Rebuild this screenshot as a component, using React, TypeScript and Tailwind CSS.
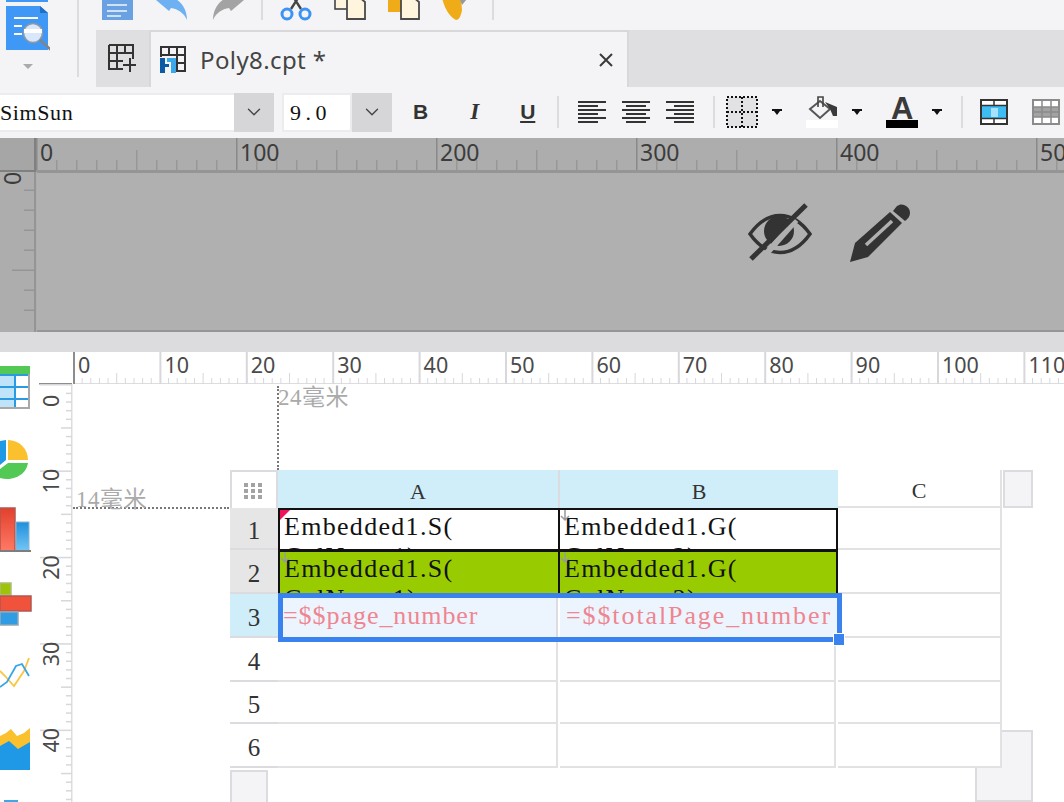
import React from 'react';
import { ChevronDown } from 'lucide-react';

const SERIF = 'font-["Liberation_Serif","Noto_Sans_CJK_SC",serif]';
const range = (n: number) => Array.from({ length: n }, (_, i) => i);

const DocIcon = () => (
  <svg width="32" height="30" viewBox="0 0 32 30">
    <rect x="1" y="-4" width="32" height="24" fill="#6aa1e2" />
    <path d="M6 5H26M6 11H26M6 16H20" stroke="#fff" strokeWidth="1.6" opacity="0.9" />
  </svg>
);

const UndoIcon = ({ flip }: { flip?: boolean }) => (
  <svg width="34" height="30" viewBox="0 0 34 30" className={flip ? '-scale-x-100' : ''}>
    <path
      d="M1 0L14 11L16 8C23 9 29 13 32 20C32 10 27 2 19 -2L1 -2Z"
      fill={flip ? '#a3a3a3' : '#6db1f2'}
    />
  </svg>
);

const ScissorsIcon = () => (
  <svg width="32" height="30" viewBox="0 0 32 30">
    <path d="M11 9L18 -2M21 9L14 -2" stroke="#444" strokeWidth="2.4" />
    <circle cx="7" cy="14" r="5" fill="none" stroke="#3b93f2" strokeWidth="3" />
    <circle cx="25" cy="14" r="5" fill="none" stroke="#3b93f2" strokeWidth="3" />
  </svg>
);

const CopyIcon = ({ back }: { back: string }) => (
  <svg width="32" height="30" viewBox="0 0 32 30">
    {back === 'sheet' ? (
      <rect x="1" y="-4" width="14" height="13" fill="#fff5de" stroke="#444" strokeWidth="1.6" />
    ) : (
      <rect x="0" y="-4" width="14" height="16" fill="#f0ac18" />
    )}
    <path d="M13 -3H25L31 2V19H13Z" fill="#fff5de" stroke="#4a4a4a" strokeWidth="1.8" />
  </svg>
);

const BrushIcon = () => (
  <svg width="26" height="30" viewBox="0 0 26 30">
    <path d="M0 -2H19L20 10C19 16 17 20 14 20C8 17 3 10 0 -2Z" fill="#f0ac18" />
    <path d="M17 -3L25 -1L20 5Z" fill="#999" />
  </svg>
);

const AppLogo = () => (
  <svg width="44" height="53" viewBox="0 0 44 53" className="ml-[6px]">
    <rect x="0" y="-2" width="42" height="4" fill="#3f98f5" />
    <path d="M0 6H34L42 13V50H0Z" fill="#3f98f5" />
    <path d="M34 6L42 13H34Z" fill="#1f6fc4" />
    <path d="M8 18H32M8 26H16M8 34H16" stroke="#fff" strokeWidth="2" />
    <circle cx="27" cy="33" r="9.5" fill="#d8e8fa" stroke="#8d98a4" strokeWidth="1.6" />
    <path d="M18 31H36" stroke="#fff" strokeWidth="4" />
    <path d="M34 40L45 50" stroke="#7b8590" strokeWidth="2.6" />
  </svg>
);

const GridPlusIcon = () => (
  <svg width="30" height="30" viewBox="0 0 30 30">
    <path d="M1 1H25V15M1 1V25H15M1 9H25M1 17H15M9 1V25M17 1V9" fill="none" stroke="#333" strokeWidth="2" />
    <path d="M22 13V27M15 20H28" stroke="#333" strokeWidth="2" transform="translate(0 1)" />
  </svg>
);

const TabFileIcon = () => (
  <svg width="28" height="28" viewBox="0 0 28 28">
    <path d="M1 1H25V25H1ZM1 9H25M9 1V9M17 1V25M17 17H25" fill="none" stroke="#333" strokeWidth="2" />
    <rect x="0" y="11" width="16" height="17" fill="#f4f4f6" />
    <path d="M0 12H5V18H9V21H5V27H0Z" fill="#0b5aa5" />
    <path d="M7 12H16V27H11V16H7Z" fill="#3aa8ea" />
  </svg>
);

const AlignIcon = ({ side }: { side: 'left' | 'center' | 'right' }) => {
  const lines = [28, 20, 28, 20, 28, 20];
  return (
    <svg width="28" height="24" viewBox="0 0 28 24">
      {lines.map((w, i) => (
        <rect
          key={i}
          x={side === 'left' ? 0 : side === 'right' ? 28 - w : (28 - w) / 2}
          y={1 + i * 4}
          width={w}
          height="2"
          fill="#333"
        />
      ))}
    </svg>
  );
};

const CaretDown = () => (
  <svg width="10" height="6" viewBox="0 0 10 6">
    <path d="M0 0H10V2H8L5 6L2 2H0Z" fill="#111" />
  </svg>
);

const Sep = () => <div className="h-[32px] w-[2px] bg-[#dcdcde]" />;

const BorderIcon = () => (
  <svg width="32" height="32" viewBox="0 0 32 32" shapeRendering="crispEdges">
    <rect x="1" y="1" width="30" height="30" fill="#e2e2e4" />
    <path d="M1 1H31V31H1ZM1 16H31M16 1V31" fill="none" stroke="#111" strokeWidth="2" strokeDasharray="2 2" />
  </svg>
);

const FillIcon = () => (
  <div className="flex h-[32px] w-[32px] flex-col items-center">
    <svg width="32" height="24" viewBox="0 0 32 24">
      <path d="M14 5L24 13L14 22L4 13Z" fill="none" stroke="#555" strokeWidth="2" />
      <path d="M12 11V1H17V11" fill="none" stroke="#444" strokeWidth="1.6" />
      <path d="M19 6L31 11L31 20L27 20L24 13Z" fill="#3a3a3a" />
    </svg>
    <div className="h-[8px] w-full bg-white" />
  </div>
);

const FontColorIcon = () => (
  <div className="flex h-[32px] w-[32px] flex-col items-center">
    <div className='h-[24px] font-["Liberation_Sans",sans-serif] text-[31px] leading-[25px] font-bold text-[#3a3a3a]'>A</div>
    <div className="h-[8px] w-full bg-black" />
  </div>
);

const CellAIcon = () => (
  <svg width="28" height="26" viewBox="0 0 28 26">
    <rect x="1" y="1" width="26" height="24" fill="#3ebdf5" stroke="#333" strokeWidth="2" />
    <rect x="2" y="2" width="24" height="4" fill="#fff" />
    <rect x="2" y="20" width="24" height="4" fill="#fff" />
    <path d="M14 2V6M14 20V24M1 6.500H27M1 19.500H27" stroke="#333" strokeWidth="1.5" />
    <rect x="11" y="9" width="7" height="9" fill="#a7e2fb" />
  </svg>
);

const TableGrayIcon = () => (
  <svg width="28" height="26" viewBox="0 0 28 26">
    <rect x="1" y="1" width="26" height="24" fill="#fff" stroke="#8b8b8b" strokeWidth="2" />
    <rect x="2" y="8" width="24" height="10" fill="#a3a3a3" />
    <path d="M10 1V25M19 1V25M1 8H27M1 13H27M1 18H27" stroke="#8b8b8b" strokeWidth="1.5" />
  </svg>
);

const EyeSlash = () => (
  <svg width="64" height="60" viewBox="0 0 64 60">
    <path d="M2 32C12 18 22 13.500 32 13.500C42 13.500 52 18 62 32C52 46 42 50.500 32 50.500C22 50.500 12 46 2 32Z" fill="none" stroke="#333" strokeWidth="3.5" />
    <circle cx="31" cy="29" r="15" fill="#333" />
    <path d="M44 15L14 49" stroke="#b0b0b0" strokeWidth="6" transform="translate(4 3)" />
    <path d="M3 57L58 3" stroke="#333" strokeWidth="5" />
  </svg>
);

const PencilIcon = () => (
  <svg width="60" height="60" viewBox="0 0 60 60">
    <path d="M0 60L5 41L40 10L52 21L18 55Z" fill="#333" />
    <path d="M16 43L42 19" stroke="#b0b0b0" strokeWidth="3.500" />
    <path d="M43 9L47 4C52 0 60 4 60 11C60 14 58 17 55 19Z" fill="#333" />
  </svg>
);

// horizontal ruler of the form pane, 100 units = 200px
const FormRulerTop = () => (
  <svg width="1028" height="34" viewBox="0 0 1028 34" className="block shrink-0">
    <rect y="32" width="1028" height="2" fill="#959595" />
    {range(53).map(i => {
      const x = i * 20;
      const h = i % 10 === 0 ? 32 : i % 5 === 0 ? 20 : 10;
      return <rect key={i} x={x} y={32 - h} width="1.5" height={h} fill={i % 10 === 0 ? '#8a8a8a' : '#989898'} />;
    })}
    {range(6).map(i => (
      <text key={i} x={i * 200 + 4} y={23} fontFamily="Noto Sans, sans-serif" fontSize="23" fill="#3c3c3c">{i * 100}</text>
    ))}
  </svg>
);

const FormRulerLeft = () => (
  <svg width="37" height="160" viewBox="0 0 37 160" className="block shrink-0">
    <rect x="34" width="2" height="160" fill="#959595" />
    {range(8).map(i => (
      <rect key={i} x={i === 5 ? 12 : 24} y={i * 20 - 2.5} width={i === 5 ? 23 : 11} height="1.500" fill="#959595" />
    ))}
    <text transform="translate(21 13) rotate(-90)" fontFamily="Noto Sans, sans-serif" fontSize="23" fill="#3c3c3c">0</text>
  </svg>
);

// report rulers, 10 units = 86.4px
const SheetRulerTop = () => (
  <svg width="991" height="32" viewBox="0 0 991 32" className="block">
    <rect y="31" width="991" height="1.500" fill="#dddde0" />
    <rect x="0" y="0" width="1.500" height="32" fill="#8d8d8d" />
    {range(115).map(i => {
      const x = i * 8.64;
      const major = i % 10 === 0;
      const h = major ? 32 : i % 5 === 0 ? 11 : 6;
      return <rect key={i} x={x} y={32 - h} width={major ? 2 : 1} height={h} fill={i === 0 ? '#8d8d8d' : '#d8d8dc'} />;
    })}
    {range(12).map(i => (
      <text key={i} x={i * 86.4 + 5} y={21} fontFamily="Noto Sans, sans-serif" fontSize="21.5" fill="#4a4a4a">{i * 10}</text>
    ))}
  </svg>
);

const SheetRulerLeft = () => (
  <svg width="34" height="450" viewBox="0 0 34 450" className="block shrink-0">
    <rect x="0" y="31" width="33" height="1.500" fill="#8d8d8d" />
    <rect x="32" y="32" width="1.500" height="418" fill="#dddde0" />
    {range(49).map(i => {
      const y = 32 + i * 8.64;
      const major = i % 10 === 0;
      const w = major ? 32 : i % 5 === 0 ? 11 : 6;
      return <rect key={i} x={33 - w} y={y} width={w} height="1.500" fill="#d8d8dc" />;
    })}
    {range(5).map(i => (
      <text key={i} transform={`translate(20 ${i * 86.4 + 55}) rotate(-90)`} fontFamily="Noto Sans, sans-serif" fontSize="21.5" fill="#4a4a4a">{i * 10}</text>
    ))}
  </svg>
);

const TableTile = () => (
  <svg width="32" height="72" viewBox="0 0 32 72" className="block overflow-visible">
    <rect x="-2" y="22" width="31" height="33" fill="#fff" />
    <rect x="-2" y="14" width="32" height="8" fill="#53c955" />
    <rect x="0" y="22" width="16" height="33" fill="#bfe4fa" />
    <path d="M-2 23H29M-2 35H29M-2 47H29M15 22V55" stroke="#2a9be3" strokeWidth="2" />
    <path d="M29 22V56H-2" fill="none" stroke="#a8a8a8" strokeWidth="2" />
  </svg>
);

const PieTile = () => (
  <svg width="32" height="72" viewBox="0 0 32 72" className="block">
    <path d="M8 36V16A20 20 0 0 1 28 36Z" fill="#fbc02d" />
    <path d="M6 16V36L0 41V17Z" fill="#1f98e6" />
    <path d="M8 39H28A21 18 0 0 1 0 54V45Z" fill="#53c955" />
  </svg>
);

const BarsTile = () => (
  <svg width="32" height="72" viewBox="0 0 32 72" className="block">
    <defs>
      <linearGradient id="redBar" x1="0" y1="0" x2="0" y2="1">
        <stop offset="0" stopColor="#e2402c" />
        <stop offset="1" stopColor="#ff7a66" />
      </linearGradient>
      <linearGradient id="blueBar" x1="0" y1="0" x2="0" y2="1">
        <stop offset="0" stopColor="#1f8fdc" />
        <stop offset="1" stopColor="#74c6f5" />
      </linearGradient>
    </defs>
    <rect x="0" y="12" width="15" height="43" fill="url(#redBar)" stroke="#b4564e" strokeWidth="1.500" />
    <rect x="16" y="26" width="13" height="29" fill="url(#blueBar)" stroke="#8fb4cc" strokeWidth="1" />
    <rect x="0" y="54" width="31" height="2" fill="#7d7d7d" />
  </svg>
);

const HBarsTile = () => (
  <svg width="33" height="72" viewBox="0 0 33 72" className="block">
    <rect x="0" y="15" width="11" height="12" fill="#9fc30a" stroke="#a8bf7a" strokeWidth="1.500" />
    <rect x="0" y="28" width="31" height="15" fill="#f0523c" stroke="#b4564e" strokeWidth="1.500" />
    <rect x="0" y="44" width="18" height="13" fill="#2f9ce4" stroke="#8fa9b8" strokeWidth="1.500" />
  </svg>
);

const LineTile = () => (
  <svg width="32" height="72" viewBox="0 0 32 72" className="block">
    <path d="M0 31L5 36L14 46L24 31L29 18" fill="none" stroke="#fbc53f" strokeWidth="1.800" />
    <path d="M0 47L7 42L16 26L22 24L29 36" fill="none" stroke="#35a6e6" strokeWidth="1.800" />
  </svg>
);

const AreaTile = () => (
  <svg width="32" height="72" viewBox="0 0 32 72" className="block">
    <path d="M0 24L6 21L11 17L17 24L24 21L30 16V38H0Z" fill="#fbc02d" />
    <path d="M0 34L9 29L18 37L30 30V58H0Z" fill="#1f98e6" />
  </svg>
);

const LastTile = () => (
  <svg width="32" height="72" viewBox="0 0 32 72" className="block">
    <rect x="4" y="16" width="14" height="4" fill="#3fa6e8" />
  </svg>
);

const HeaderDots = () => (
  <svg width="20" height="16" viewBox="0 0 20 16">
    {range(3).map(r => range(3).map(c => <rect key={`${r}${c}`} x={c * 7} y={r * 6} width="4" height="4" fill="#a3a3a3" />))}
  </svg>
);

const BLACK_CELL = 'border-2 border-[#111] -mb-[1px] relative z-[1] overflow-hidden pl-[4px] pt-[2px] whitespace-nowrap text-[26px] leading-[30px] tracking-[1.3px] text-[#111]';

const CellMark = () => (
  <svg width="10" height="12" viewBox="0 0 10 12" className="absolute top-0 left-0">
    <path d="M5 0V9M1 6L5 10L9 6" fill="none" stroke="#999" strokeWidth="1.500" />
  </svg>
);

const RowHead = ({ n, bg }: { n: number; bg: string }) => (
  <div className={`flex items-center justify-center border-b-2 border-[#dcdce0] pt-[5px] text-[25px] text-[#333] ${bg}`}>{n}</div>
);

const EmptyRow = ({ n }: { n: number }) => (
  <>
    <RowHead n={n} bg="bg-white" />
    <div className="mr-[2px] border-r-2 border-b-2 border-[#e2e2e4]" />
    <div className="mr-[2px] border-r-2 border-b-2 border-[#e2e2e4]" />
    <div className="border-r-2 border-b-2 border-[#e2e2e4]" />
  </>
);

const ReportGrid = () => (
  <div
    className={`relative z-[1] grid w-[772px] grid-cols-[48px_282px_278px_164px] grid-rows-[38px_42px_44px_44px_44px_42px_44px] bg-white leading-[26px] ${SERIF}`}
  >
    <div className="flex items-center justify-center border-t-2 border-r-2 border-l-2 border-[#dcdce0] pt-[2px]">
      <HeaderDots />
    </div>
    <div className="flex items-center justify-center border-r-2 border-[#dcdce0] bg-[#cfeefa] pt-[6px] text-[22px] text-[#333]">A</div>
    <div className="flex items-center justify-center bg-[#cfeefa] pt-[6px] text-[22px] text-[#333]">B</div>
    <div className="flex items-center justify-center border-r-2 border-b-2 border-[#e2e2e4] pt-[6px] text-[22px] text-[#333]">C</div>

    <RowHead n={1} bg="bg-[#e6e6e6]" />
    <div className={`${BLACK_CELL} bg-white`}>
      <span className="absolute top-0 left-0 h-0 w-0 border-t-[10px] border-r-[10px] border-t-[#f0145a] border-r-transparent" />
      Embedded1.S(
      <br />
      ColName1)
    </div>
    <div className={`${BLACK_CELL} bg-white -ml-[2px]`}>
      <CellMark />
      Embedded1.G(
      <br />
      ColName2)
    </div>
    <div className="border-r-2 border-b-2 border-[#e2e2e4]" />

    <RowHead n={2} bg="bg-[#e6e6e6]" />
    <div className={`${BLACK_CELL} bg-[#9c0]`}>
      <CellMark />
      Embedded1.S(
      <br />
      ColName1)
    </div>
    <div className={`${BLACK_CELL} bg-[#9c0] -ml-[2px]`}>
      <CellMark />
      Embedded1.G(
      <br />
      ColName2)
    </div>
    <div className="border-r-2 border-b-2 border-[#e2e2e4]" />

    <RowHead n={3} bg="bg-[#cfeefa]" />
    <div className="mr-[2px] flex items-center border-r-2 border-[#dcdce4] bg-[#ecf5fd] pb-[1px] pl-[5px] text-[26px] tracking-[0.95px] text-[#ef8590]">=$$page_number</div>
    <div className="flex items-center bg-[#ecf5fd] pb-[1px] pl-[6px] text-[26px] tracking-[1.9px] whitespace-nowrap text-[#ef8590]">=$$totalPage_number</div>
    <div className="border-r-2 border-b-2 border-[#e2e2e4]" />

    <EmptyRow n={4} />
    <EmptyRow n={5} />
    <EmptyRow n={6} />

    {/* selection box over cells A3:B3 */}
    <div className="pointer-events-none absolute top-[123px] left-[48px] z-[2] h-[49px] w-[564px] border-[5px] border-[#3a83ee]" />
    <div className="pointer-events-none absolute top-[164px] left-[604px] z-[3] h-[11px] w-[10px] bg-[#3a83ee] outline-1 outline-white" />
  </div>
);

export default function App() {
  return (
    <div className="flex h-[802px] w-[1064px] flex-col overflow-hidden bg-white">
      {/* top toolbars */}
      <div className="flex h-[87px] shrink-0 bg-[#f4f4f6]">
        <div className="h-[77px] w-[79px] shrink-0 border-r-2 border-[#dcdcde]">
          <AppLogo />
          <div className="mt-[11px] ml-[23px] h-0 w-0 border-t-[5px] border-r-[5px] border-l-[5px] border-t-[#aaa] border-r-transparent border-l-transparent" />
        </div>
        <div className="flex min-w-0 flex-1 flex-col">
          <div className="flex h-[30px] items-start overflow-hidden pl-[22px]">
            <div className="flex gap-[22px]">
              <DocIcon />
              <UndoIcon />
              <UndoIcon flip />
            </div>
            <div className="mr-[17px] ml-[16px] h-[20px] w-[2px] bg-[#dcdcde]" />
            <div className="flex gap-[22px]">
              <ScissorsIcon />
              <CopyIcon back="sheet" />
              <CopyIcon back="block" />
              <BrushIcon />
            </div>
            <div className="ml-[24px] h-[20px] w-[2px] bg-[#dcdcde]" />
          </div>
          <div className="ml-[17px] flex h-[57px] bg-[#dfdfe1]">
            <div className="flex w-[53px] items-center justify-center pt-[1px] pl-[1px]">
              <GridPlusIcon />
            </div>
            <div className="flex w-[480px] items-center border-t-2 border-r-2 border-l-2 border-[#d8d8da] bg-[#f4f4f6] pl-[9px] font-['Noto_Sans',sans-serif] text-[24px] tracking-[0.4px] text-[#444]">
              <TabFileIcon />
              <span className="ml-[12px]">Poly8.cpt *</span>
              <svg width="14" height="14" viewBox="0 0 14 14" className="mr-[14px] ml-auto">
                <path d="M1 1L13 13M13 1L1 13" stroke="#3a3a3a" strokeWidth="2" />
              </svg>
            </div>
          </div>
        </div>
      </div>

      {/* font row */}
      <div className="flex h-[51px] shrink-0 items-center bg-[#f4f4f6] pb-[1px]">
        <div className={`flex h-[39px] w-[234px] items-center border-y-2 border-[#ececee] bg-white text-[22px] tracking-[0.6px] text-[#111] ${SERIF}`}>SimSun</div>
        <div className="flex h-[39px] w-[40px] items-center justify-center bg-[#d6d6d8]">
          <ChevronDown size={22} strokeWidth={1.5} color="#444" />
        </div>
        <div className={`ml-[8px] flex h-[39px] w-[70px] items-center border-2 border-[#ececee] bg-white pl-[6px] text-[22px] tracking-[4.5px] text-[#111] ${SERIF}`}>9.0</div>
        <div className="flex h-[39px] w-[40px] items-center justify-center bg-[#d6d6d8]">
          <ChevronDown size={22} strokeWidth={1.5} color="#444" />
        </div>
        <span className='ml-[21px] font-["Liberation_Sans",sans-serif] text-[21px] font-bold text-[#333]'>B</span>
        <span className='ml-[42px] font-["Liberation_Serif",serif] text-[23px] font-bold text-[#333] italic'>I</span>
        <span className='ml-[41px] font-["Liberation_Sans",sans-serif] text-[21px] font-bold text-[#333] underline'>U</span>
        <div className="ml-[22px]"><Sep /></div>
        <div className="ml-[19px] flex gap-[16px]">
          <AlignIcon side="left" />
          <AlignIcon side="center" />
          <AlignIcon side="right" />
        </div>
        <div className="ml-[19px]"><Sep /></div>
        <div className="ml-[11px]"><BorderIcon /></div>
        <div className="ml-[14px]"><CaretDown /></div>
        <div className="ml-[24px]"><FillIcon /></div>
        <div className="ml-[14px]"><CaretDown /></div>
        <div className="ml-[24px]"><FontColorIcon /></div>
        <div className="ml-[14px]"><CaretDown /></div>
        <div className="ml-[19px]"><Sep /></div>
        <div className="ml-[17px]"><CellAIcon /></div>
        <div className="ml-[24px]"><TableGrayIcon /></div>
      </div>

      {/* form pane */}
      <div className="flex h-[194px] shrink-0 flex-col bg-[#adadad]">
        <div className="flex h-[34px] shrink-0">
          <div className="h-[34px] w-[36px] shrink-0 border-r-2 border-b-2 border-[#808080] bg-[#a6a6a6]" />
          <FormRulerTop />
        </div>
        <div className="flex min-h-0 flex-1">
          <FormRulerLeft />
          <div className="flex flex-1 gap-[38px] border-t-1 border-b-2 border-[#959595] bg-[#b0b0b0] pt-[29px] pl-[711px]">
            <EyeSlash />
            <PencilIcon />
          </div>
        </div>
      </div>
      <div className="h-[20px] shrink-0 bg-[#dcdcde]" />

      {/* report body */}
      <div className="flex min-h-0 flex-1 bg-white">
        <div className="w-[39px] shrink-0">
          <TableTile />
          <PieTile />
          <BarsTile />
          <HBarsTile />
          <LineTile />
          <AreaTile />
          <LastTile />
        </div>
        <SheetRulerLeft />
        <div className="flex min-w-0 flex-1 flex-col">
          <SheetRulerTop />
          <div className={`relative flex-1 pt-[86px] pl-[157px] ${SERIF}`}>
            {/* dotted guides of the top and left margin */}
            <div className="absolute top-[2px] left-[204px] h-[84px] border-l-2 border-dotted border-[#777]" />
            <div className="absolute top-[123px] left-0 w-[156px] border-t-2 border-dotted border-[#777]" />
            <span className="absolute top-[1px] left-[205px] text-[23px] leading-[26px] tracking-[0.5px] text-[#aaa]">24毫米</span>
            <span className="absolute top-[103px] left-[3px] text-[23px] leading-[26px] tracking-[0.5px] text-[#aaa]">14毫米</span>
            {/* scroll bars behind the sheet */}
            <div className="absolute top-[86px] left-[930px] h-[38px] w-[30px] border-2 border-[#dcdce0] bg-[#f4f4f6]" />
            <div className="absolute top-[346px] left-[902px] h-[72px] w-[58px] border-2 border-[#dcdce0] bg-[#f4f4f6]" />
            <div className="absolute top-[386px] left-[157px] h-[40px] w-[38px] border-2 border-[#dcdce0] bg-[#f4f4f6]" />
            <ReportGrid />
          </div>
        </div>
      </div>
    </div>
  );
}
